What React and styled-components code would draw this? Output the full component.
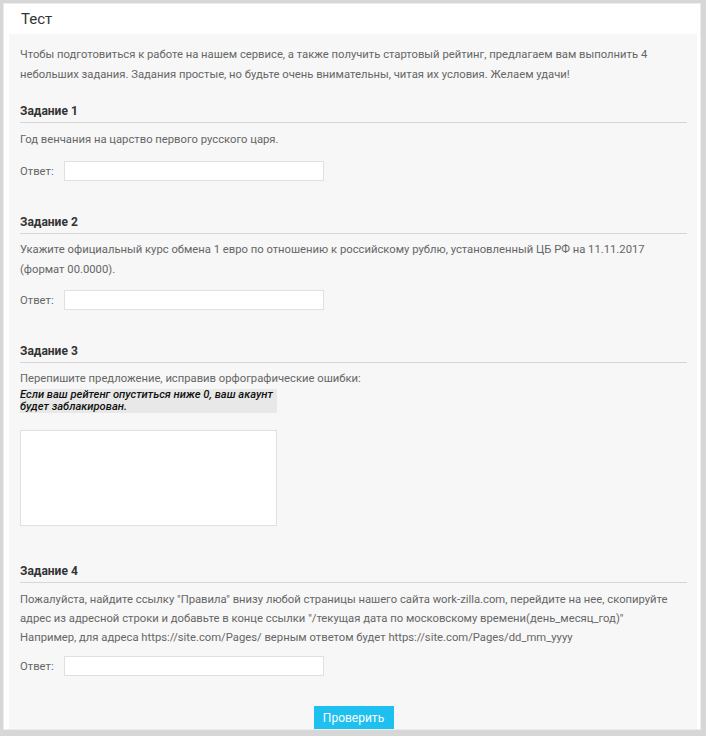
import styled, { createGlobalStyle } from "styled-components";

const Global = createGlobalStyle`
  html, body {
    margin: 0;
    padding: 0;
    background: #d7d7d7;
  }
  body {
    font-family: Roboto, "Open Sans", sans-serif;
  }
`;

const Frame = styled.div`
  margin: 3px 5px 0 3px;
  height: 727px;
  box-sizing: border-box;
  background: #fff;
  border: 1px solid #ececec;
  display: flex;
  flex-direction: column;
  padding: 0 3px 3px 5px;
  overflow: hidden;
`;

const Title = styled.div`
  height: 30px;
  line-height: 31px;
  padding-left: 12px;
  font-size: 15px;
  color: #333;
`;

const Panel = styled.div`
  flex: 1;
  background: #f7f7f7;
  padding: 11px 10px 0 11px;
  display: flex;
  flex-direction: column;
`;

const Text = styled.p`
  max-width: 655px;
  margin: ${({ $top }) => $top || 0}px 0 0;
  font-size: 11.25px;
  line-height: ${({ $lh }) => $lh || 20}px;
  color: #666;
`;

const Task = styled.section`
  margin-top: ${({ $top }) => $top}px;
`;

const Heading = styled.h3`
  margin: 0;
  font-size: 12px;
  font-weight: 700;
  line-height: 20px;
  color: #333;
  padding-bottom: 1px;
  border-bottom: 1px solid #d6d6d6;
`;

const AnswerRow = styled.div`
  display: flex;
  align-items: center;
  margin-top: ${({ $top }) => $top || 10}px;
`;

const Label = styled.span`
  width: 44px;
  font-size: 11.25px;
  color: #666;
`;

const Input = styled.input`
  width: 260px;
  height: 20px;
  box-sizing: border-box;
  border: 1px solid #e0e0e0;
  background: #fff;
  outline: none;
`;

const Quote = styled.div`
  width: 257px;
  background: #e8e8e8;
  font-size: 11.2px;
  line-height: 12px;
  white-space: nowrap;
  font-style: italic;
  font-weight: 500;
  color: #111;
`;

const Area = styled.textarea`
  display: block;
  width: 257px;
  height: 96px;
  box-sizing: border-box;
  margin-top: 17px;
  border: 1px solid #e0e0e0;
  background: #fff;
  resize: none;
  outline: none;
`;

const Footer = styled.div`
  display: flex;
  justify-content: center;
  margin-top: 30px;
`;

const Button = styled.button`
  width: 80px;
  height: 23px;
  border: 0;
  background: #1ec0f0;
  color: #fff;
  font-family: inherit;
  font-size: 12px;
  cursor: pointer;
`;

export default function App() {
  return (
    <>
      <Global />
      <Frame>
        <Title>Тест</Title>
        <Panel>
          <Text>
            Чтобы подготовиться к работе на нашем сервисе, а также получить стартовый рейтинг, предлагаем вам выполнить 4
            небольших задания. Задания простые, но будьте очень внимательны, читая их условия. Желаем удачи!
          </Text>

          <Task $top={16}>
            <Heading>Задание 1</Heading>
            <Text $top={7}>Год венчания на царство первого русского царя.</Text>
            <AnswerRow $top={11}>
              <Label>Ответ:</Label>
              <Input type="text" />
            </AnswerRow>
          </Task>

          <Task $top={31}>
            <Heading>Задание 2</Heading>
            <Text $top={6}>
              Укажите официальный курс обмена 1 евро по отношению к российскому рублю, установленный ЦБ РФ на 11.11.2017
              (формат 00.0000).
            </Text>
            <AnswerRow>
              <Label>Ответ:</Label>
              <Input type="text" />
            </AnswerRow>
          </Task>

          <Task $top={31}>
            <Heading>Задание 3</Heading>
            <Text $top={6}>Перепишите предложение, исправив орфографические ошибки:</Text>
            <Quote>
              Если ваш рейтенг опуститься ниже 0, ваш акаунт
              <br />
              будет заблакирован.
            </Quote>
            <Area />
          </Task>

          <Task $top={35}>
            <Heading>Задание 4</Heading>
            <Text $top={7} $lh={19}>
              Пожалуйста, найдите ссылку "Правила" внизу любой страницы нашего сайта work-zilla.com, перейдите на нее, скопируйте
              адрес из адресной строки и добавьте в конце ссылки "/текущая дата по московскому времени(день_месяц_год)"
              <br />
              Например, для адреса https://site.com/Pages/ верным ответом будет https://site.com/Pages/dd_mm_yyyy
            </Text>
            <AnswerRow $top={9}>
              <Label>Ответ:</Label>
              <Input type="text" />
            </AnswerRow>
          </Task>

          <Footer>
            <Button type="button">Проверить</Button>
          </Footer>
        </Panel>
      </Frame>
    </>
  );
}
